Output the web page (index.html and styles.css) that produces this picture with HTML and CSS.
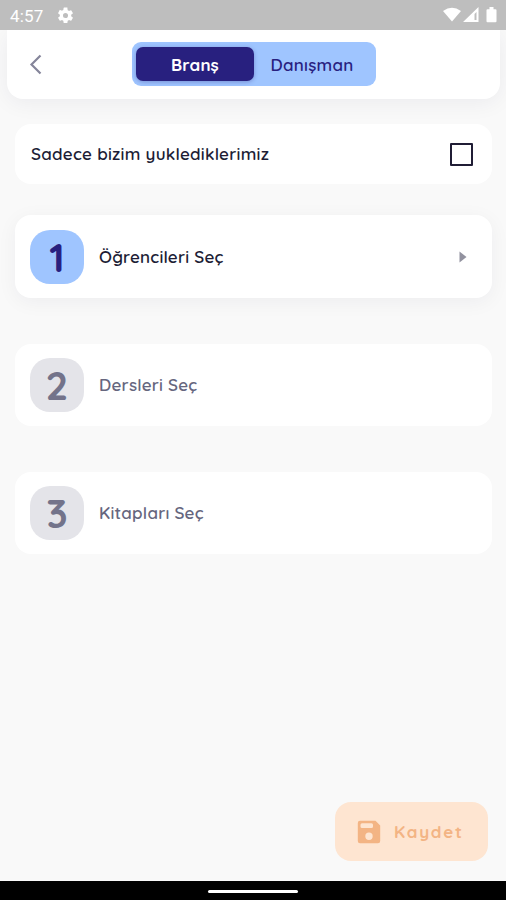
FILE: index.html
```html
<!DOCTYPE html>
<html lang="tr">
<head>
<meta charset="utf-8">
<title>Branş</title>
<link rel="stylesheet" href="styles.css">
</head>
<body>
<div class="screen">
  <div class="status">
    <span class="time">4:57</span>
    <svg class="gear" width="19" height="19" viewBox="0 0 24 24"><path fill="#fff" d="M19.14 12.94c.04-.3.06-.61.06-.94s-.02-.64-.07-.94l2.03-1.58a.49.49 0 0 0 .12-.61l-1.92-3.32a.49.49 0 0 0-.59-.22l-2.39.96a7 7 0 0 0-1.62-.94l-.36-2.54A.48.48 0 0 0 13.92 2h-3.84a.48.48 0 0 0-.48.41l-.36 2.54a7.300 7.300 0 0 0-1.620.94l-2.390-.96a.49.49 0 0 0-.59.22L2.740 8.870a.47.47 0 0 0 .12.61l2.030 1.580a6 6 0 0 0 0 1.880l-2.030 1.580a.49.49 0 0 0-.12.61l1.920 3.320c.12.22.37.29.59.22l2.390-.96c.5.380 1.030.7 1.620.94l.36 2.540c.05.240.240.410.480.410h3.840c.24 0 .440-.17.470-.41l.36-2.540a7 7 0 0 0 1.620-.94l2.390.96c.22.080.470 0 .590-.22l1.920-3.320a.47.47 0 0 0-.12-.61zM12 15.200a3.200 3.200 0 1 1 0-6.400 3.200 3.200 0 0 1 0 6.400z"/></svg>
    <svg class="signals" width="56" height="18" viewBox="0 0 56 18">
      <g fill="#fff"><path d="M1 5Q10-1.500 19 5L10 15.500z"/><path fill-rule="evenodd" d="M21 16L36.500 1V16zM32.500 8V14H34.500V6z"/><path d="M45.500 3.200h2V1h4v2.200h2q1 0 1 1v11q0 1-1 1h-8q-1 0-1-1v-11q0-1 1-1z"/></g>
    </svg>
  </div>
  <header class="header">
    <svg class="back" width="14" height="22" viewBox="0 0 14 22"><path d="M11.500 1.500L2.500 10.500l9 9" fill="none" stroke="#85859a" stroke-width="2.200"/></svg>
    <div class="tabs"><div class="tab active"><span class="t-brans">Branş</span></div><div class="tab"><span class="t-dan">Danışman</span></div></div>
  </header>
  <main class="main">
    <div class="card filter"><span class="t-filter">Sadece bizim yuklediklerimiz</span><span class="checkbox"></span></div>
    <div class="card step current"><span class="num">1</span><span class="t-step">Öğrencileri Seç</span>
      <svg class="arrow" width="8" height="12" viewBox="0 0 8 12"><path d="M.5.5L7.500 6 .5 11.500z" fill="#92929f"/></svg></div>
    <div class="card step"><span class="num">2</span><span class="t-step">Dersleri Seç</span></div>
    <div class="card step"><span class="num">3</span><span class="t-step">Kitapları Seç</span></div>
    <div class="save">
      <svg width="24" height="24" viewBox="0 0 24 24"><path fill="#f3b484" fill-rule="evenodd" d="M3 .8h15.500L23.200 5.500V21q0 2.200-2.200 2.200H3Q.8 23.200.8 21V3Q.8.8 3 .8zM5 3.300Q3.500 3.300 3.500 4.800V6.500Q3.500 8 5 8h9.500Q16 8 16 6.500V4.800Q16 3.300 14.500 3.300zM12 12.500a3.700 3.700 0 1 0 0 7.400 3.700 3.700 0 0 0 0-7.400z"/></svg>
      <span class="t-save">Kaydet</span>
    </div>
  </main>
  <div class="nav"><span class="handle"></span></div>
</div>
</body>
</html>
```
FILE: styles.css
```css
* { box-sizing: border-box; }
body { margin: 0; font-family: Quicksand, Lato, "Noto Sans", sans-serif; color: #201d35; }
.screen { width: 506px; height: 900px; display: flex; flex-direction: column; background: #f9f9f9; overflow: hidden; }
.status { height: 30px; flex: none; background: #bebebe; display: flex; align-items: center; padding: 0 8px 0 10px; position: relative; z-index: 1; }
.time { font: 400 17px/30px Roboto, sans-serif; color: #fff; width: 46px; letter-spacing: .2px; padding-top: 1px; }
.gear { margin-top: 1px; }
.signals { margin-left: auto; }
.header { height: 69px; flex: none; margin: 0 6px 0 7px; background: #fff; border-radius: 0 0 16px 16px; box-shadow: 0 4px 22px #1515400f; display: flex; align-items: center; padding-left: 22px; }
.tabs { width: 244px; height: 44px; margin: -1px 0 0 89px; background: #9fc5ff; border-radius: 9px; padding: 5px 4px; display: flex; }
.tab { flex: 1; display: flex; align-items: center; justify-content: center; color: #28207f; font-size: 17px; font-weight: 600; white-space: nowrap; padding-right: 2px; }
.tab.active { flex: 0 0 118px; background: #28207f; color: #fff; border-radius: 7px; font-weight: 700; box-shadow: 0 1px 4px #28207f55; padding: 0; }
.main { flex: 1; display: flex; flex-direction: column; padding: 25px 14px 20px 15px; }
.card { background: #fff; border-radius: 16px; flex: none; display: flex; align-items: center; font-size: 17px; font-weight: 600; white-space: nowrap; }
.filter { height: 60px; padding: 0 19px 0 16px; margin-bottom: 31px; justify-content: space-between; }
.checkbox { width: 23px; height: 23px; border: 2px solid #201d35; border-radius: 1px; }
.step { height: 82px; margin-bottom: 46px; padding: 0 25px 0 15px; color: #66667e; }
.current { height: 83px; color: #201d35; box-shadow: 0 4px 20px #1515400d; }
.num { width: 54px; height: 54px; margin-right: 15px; border-radius: 20px; background: #e4e4e9; color: #73738a; font-size: 40px; line-height: 54px; font-weight: 700; text-align: center; }
.current .num { background: #9fc5ff; color: #28207f; }
.arrow { margin-left: auto; }
.save { width: 153px; height: 59px; margin: auto 4px 0 auto; border-radius: 16px; background: #fee5d1; color: #f3b484; display: flex; align-items: center; padding-left: 22px; gap: 13px; font-size: 17px; font-weight: 700; }
.nav { height: 19px; flex: none; background: #000; display: flex; align-items: center; justify-content: center; padding-top: 2px; }
.handle { width: 90px; height: 3px; border-radius: 2px; background: #fff; }
.t-brans { letter-spacing: .1px; }
.t-dan { letter-spacing: .25px; }
.t-filter { letter-spacing: .25px; margin-top: -1px; }
.t-step { letter-spacing: .2px; margin-top: -1px; }
.t-save { letter-spacing: 1.7px; }
```
